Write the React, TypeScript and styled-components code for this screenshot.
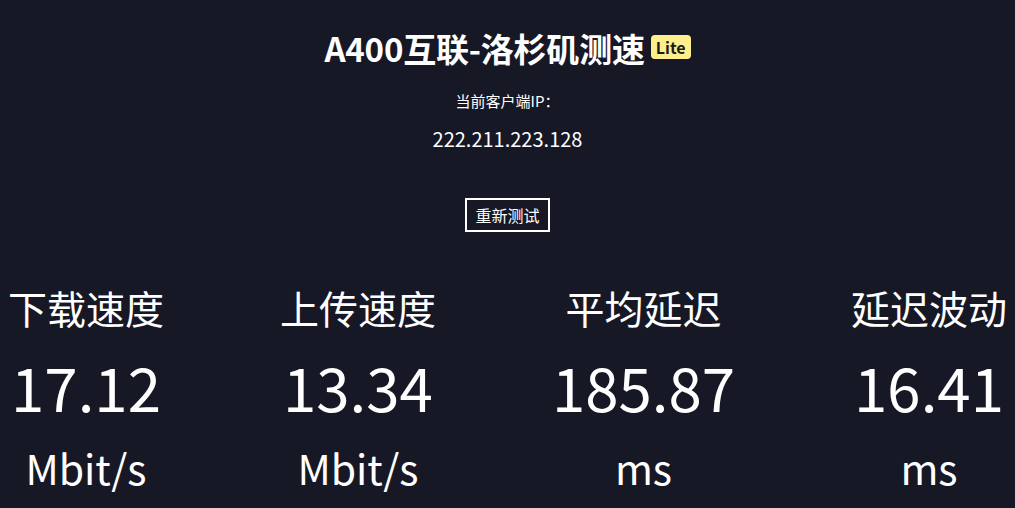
import React, { FC } from "react";
import styled, { createGlobalStyle } from "styled-components";

const GlobalStyle = createGlobalStyle`
  html, body {
    background: #171826;
  }
  body {
    margin: 8px;
    color: #ffffff;
    font-family: "Noto Sans CJK SC", "Noto Sans", sans-serif;
  }
`;

type Stat = {
  label: string;
  value: string;
  unit: string;
};

const stats: Stat[] = [
  { label: "下载速度", value: "17.12", unit: "Mbit/s" },
  { label: "上传速度", value: "13.34", unit: "Mbit/s" },
  { label: "平均延迟", value: "185.87", unit: "ms" },
  { label: "延迟波动", value: "16.41", unit: "ms" },
];

const App: FC = () => {
  return (
    <Page>
      <GlobalStyle />
      <Header>
        <Title>A400互联-洛杉矶测速</Title>
        <Badge>Lite</Badge>
      </Header>
      <IpLabel>当前客户端IP：</IpLabel>
      <IpValue>222.211.223.128</IpValue>
      <RetestButton>重新测试</RetestButton>
      <StatsRow>
        {stats.map(s => (
          <StatItem key={s.label}>
            <StatLabel>{s.label}</StatLabel>
            <StatValue>{s.value}</StatValue>
            <StatUnit>{s.unit}</StatUnit>
          </StatItem>
        ))}
      </StatsRow>
    </Page>
  );
};

export default App;

const Page = styled.div`
  display: flex;
  flex-direction: column;
  align-items: center;
  padding-top: 20px;
`;

const Header = styled.div`
  display: flex;
  align-items: center;
  gap: 6px;
  height: 40px;
`;

const Title = styled.h1`
  margin: 0;
  font-size: 33px;
  line-height: 40px;
  font-weight: 700;
  letter-spacing: -0.2px;
`;

const Badge = styled.span`
  background: #fdef8c;
  color: #1a1a1a;
  font-size: 16px;
  font-weight: 700;
  line-height: 24px;
  padding: 0 5px;
  border-radius: 4px;
  margin-top: -2px;
`;

const IpLabel = styled.div`
  margin-top: 23px;
  font-size: 15px;
  line-height: 20px;
`;

const IpValue = styled.div`
  margin-top: 16px;
  font-size: 20px;
  line-height: 24px;
`;

const RetestButton = styled.button`
  margin-top: 47px;
  height: 34px;
  padding: 0 8px;
  background: transparent;
  border: 2px solid #ffffff;
  color: #ffffff;
  font-family: inherit;
  font-size: 16px;
  line-height: 20px;
  cursor: pointer;
`;

const StatsRow = styled.div`
  align-self: stretch;
  display: flex;
  justify-content: space-between;
  margin-top: 52px;
`;

const StatItem = styled.div`
  display: flex;
  flex-direction: column;
  align-items: center;
`;

const StatLabel = styled.div`
  font-size: 39px;
  line-height: 46px;
`;

const StatValue = styled.div`
  margin-top: 18px;
  font-size: 60px;
  line-height: 76px;
`;

const StatUnit = styled.div`
  margin-top: 18px;
  font-size: 41px;
  line-height: 50px;
`;
